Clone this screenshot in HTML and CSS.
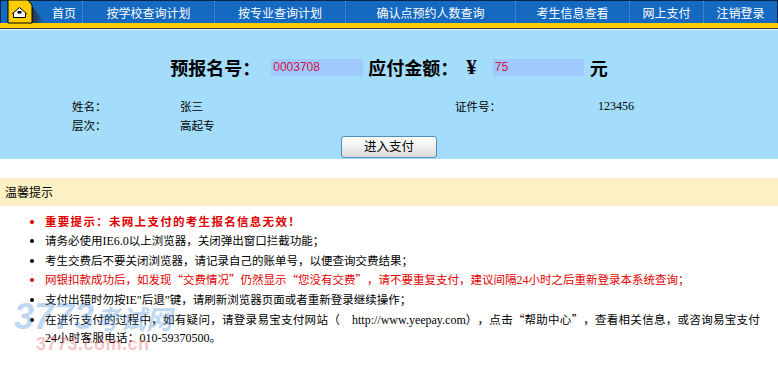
FILE: index.html
```html
<!DOCTYPE html>
<html lang="zh-CN">
<head>
    <meta charset="UTF-8">
    <title>网上支付</title>
    <link rel="stylesheet" href="styles.css">
</head>
<body>
    <div class="nav">
        <div class="nav-home">
            <svg width="45" height="22" viewBox="0 0 45 22">
                <defs>
                    <linearGradient id="fold" x1="0" y1="0" x2="1" y2="0">
                        <stop offset="0" stop-color="#2b3440"/>
                        <stop offset="1" stop-color="#1569c0"/>
                    </linearGradient>
                </defs>
                <polygon points="31,5 44,22 31,22" fill="url(#fold)"/>
                <polygon points="7,-1 27,-1 31,4 31,22 7,22" fill="#ffcc00" stroke="#000" stroke-width="1"/>
                <polygon points="11.5,12.5 18.5,6.5 25.5,12.5 24.5,12.5 24.5,16.5 12.5,16.5 12.5,12.5" fill="#fff" stroke="#000" stroke-width="1"/>
                <rect x="16.5" y="10" width="4" height="2.5" fill="#000"/>
            </svg>
        </div>
        <a class="nav-item first" href="#">首页</a>
        <a class="nav-item w132" href="#">按学校查询计划</a>
        <a class="nav-item w131" href="#">按专业查询计划</a>
        <a class="nav-item w170" href="#">确认点预约人数查询</a>
        <a class="nav-item w114" href="#">考生信息查看</a>
        <a class="nav-item w74" href="#">网上支付</a>
        <a class="nav-item w74" href="#">注销登录</a>
    </div>
    <div class="nav-strip"></div>

    <div class="pay">
        <div class="pay-line">
            <span class="big">预报名号：</span>
            <input class="pay-input no" type="text" readonly value="0003708">
            <span class="big">应付金额：</span>
            <span class="yen">¥</span>
            <input class="pay-input fee" type="text" readonly value="75">
            <span class="big">元</span>
        </div>
        <div class="info">
            <span>姓名：</span><span>张三</span><span>证件号：</span><span class="en">123456</span>
            <span>层次：</span><span>高起专</span><span></span><span></span>
        </div>
        <div class="pay-btn-row">
            <button class="pay-btn" type="button">进入支付</button>
        </div>
    </div>

    <div class="tip-head">温馨提示</div>
    <ul class="tips">
        <li class="strong">重要提示：未网上支付的考生报名信息无效！</li>
        <li>请务必使用<span class="en">IE6.0</span>以上浏览器，关闭弹出窗口拦截功能；</li>
        <li>考生交费后不要关闭浏览器，请记录自己的账单号，以便查询交费结果；</li>
        <li class="warn">网银扣款成功后，如发现<span class="ql">“</span>交费情况<span class="qr">”</span>仍然显示<span class="ql">“</span>您没有交费<span class="qr">”</span>，请不要重复支付，建议间隔<span class="en">24</span>小时之后重新登录本系统查询；</li>
        <li>支付出错时勿按<span class="en">IE"</span>后退<span class="en">"</span>键，请刷新浏览器页面或者重新登录继续操作；</li>
        <li class="wide">在进行支付的过程中，如有疑问，请登录易宝支付网站（<span class="en url">http://www.yeepay.com</span>），点击<span class="ql">“</span>帮助中心<span class="qr">”</span>，查看相关信息，或咨询易宝支付<span class="tel"><span class="en">24</span>小时客服电话：<span class="en">010-59370500</span>。</span></li>
    </ul>

    <div class="watermark">
        <div class="wm-logo"><span class="wm-num">3773</span>考试网</div>
        <div class="wm-site">3773.com.cn</div>
    </div>
</body>
</html>
```

FILE: styles.css
```css
body {
    margin: 0;
    width: 778px;
    font-family: "Noto Sans CJK SC", sans-serif;
    font-size: 11.5px;
    color: #000;
    background: #fff;
    position: relative;
}
.en {
    font-family: "Liberation Serif", serif;
    font-size: 12px;
    letter-spacing: 0;
}

/* top menu */
.nav {
    display: flex;
    height: 22px;
    background: #1569c0;
    border: 1px solid #0b2448;
    border-bottom-color: #000;
}
.nav-home {
    width: 45px;
    flex: none;
}
.nav-home svg {
    display: block;
    overflow: visible;
}
.nav-item {
    flex: none;
    box-sizing: border-box;
    display: flex;
    align-items: center;
    justify-content: center;
    height: 22px;
    color: #fff;
    font-size: 12px;
    text-decoration: none;
    border-left: 1px dotted rgba(190,220,250,0.45);
}
.nav-item.first {
    width: 36px;
    border-left: none;
    justify-content: flex-end;
    padding-right: 6px;
}
.w132 { width: 132px; }
.w131 { width: 131px; }
.w170 { width: 170px; }
.w114 { width: 114px; }
.w74 { width: 74px; }
.nav-strip {
    height: 4px;
    background: #ffcc00;
    border-bottom: 1px solid #333;
    border-top: 1px solid #ffcc00;
    box-shadow: 0 1px 0 #e8f6ff;
    margin-top: -1px;
}

/* payment block */
.pay {
    background: #a4ddfb;
    margin-top: 1px;
    padding: 28px 0 1px 0;
}
.pay-line {
    display: flex;
    justify-content: center;
    align-items: center;
    height: 18px;
}
.big {
    font-size: 18px;
    font-weight: bold;
    line-height: 18px;
}
.yen {
    font-family: "Liberation Serif", serif;
    font-size: 21px;
    font-weight: bold;
    line-height: 18px;
    margin: 0 16px 0 8px;
}
.pay-input {
    box-sizing: border-box;
    height: 17px;
    border: none;
    padding: 0 2px;
    background: #9ec9fa;
    color: #d4104a;
    font-family: "Liberation Sans", sans-serif;
    font-size: 12px;
    outline: none;
}
.pay-input.no {
    width: 92px;
    margin: 0 5px 0 11px;
}
.pay-input.fee {
    width: 91px;
    margin-right: 6px;
}
.info {
    display: grid;
    grid-template-columns: 108px 275px 143px 1fr;
    padding-left: 72px;
    margin-top: 21px;
    line-height: 18.5px;
}
.pay-btn-row {
    text-align: center;
    margin-top: 2px;
}
.pay-btn {
    width: 96px;
    height: 22px;
    border: 1px solid #4f8fb8;
    border-radius: 3px;
    background: linear-gradient(#ffffff, #f2f2f2 45%, #d8d8d8);
    font-family: "Noto Sans CJK SC", sans-serif;
    font-size: 12.5px;
    line-height: 18px;
    padding: 0 0 2px 0;
    color: #000;
    vertical-align: top;
}

/* tips */
.tip-head {
    margin-top: 19px;
    height: 28px;
    line-height: 28px;
    padding-left: 5px;
    font-size: 12px;
    background: #fdf0c4;
}
.tips {
    margin: 0;
    padding: 6.5px 6px 0 45px;
    list-style: disc;
    text-spacing-trim: space-all;
}
.tips li {
    line-height: 17px;
    margin-bottom: 2.2px;
}
.tips li.strong {
    color: #e00000;
    font-weight: bold;
    letter-spacing: 1.3px;
}
.tips li.warn {
    color: #e00000;
}
.tips li.wide {
    letter-spacing: 0.3px;
}
.tips .url {
    margin-left: 12px;
}
.tips .tel {
    white-space: nowrap;
}
.ql,
.qr {
    display: inline-block;
    width: 1em;
}
.ql {
    text-align: right;
}
.qr {
    text-align: left;
}

/* faint site stamp over the list */
.watermark {
    position: absolute;
    left: 14px;
    top: 300px;
    pointer-events: none;
}
.wm-logo {
    color: #4a8fd6;
    opacity: 0.35;
    font-size: 26px;
    font-weight: bold;
    font-style: italic;
    line-height: 34px;
}
.wm-num {
    font-family: "Liberation Sans", sans-serif;
    font-size: 36px;
}
.wm-site {
    color: #e04040;
    opacity: 0.3;
    font-family: "Liberation Sans", sans-serif;
    font-size: 18px;
    font-weight: bold;
    letter-spacing: 0.5px;
    margin-left: 22px;
    line-height: 18px;
}
```
